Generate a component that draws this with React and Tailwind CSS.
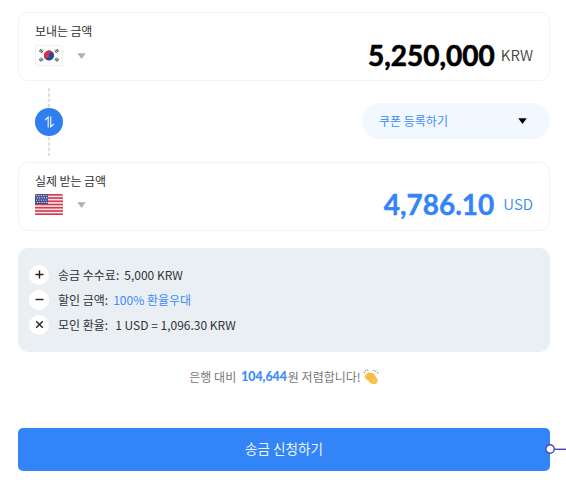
import React from "react";

function Triangle({ className }) {
  return (
    <svg className={className} viewBox="0 0 9 6" aria-hidden="true">
      <path d="M0.3 0.2H8.7L4.5 5.9Z" fill="currentColor" />
    </svg>
  );
}

function KoreaFlag() {
  const trigrams = [
    [6.2, 6, -56],
    [21.8, 6, 56],
    [6.2, 14.7, 56],
    [21.8, 14.7, -56],
  ];
  return (
    <svg className="h-[21px] w-7" viewBox="0 0 28 21" aria-label="KR">
      <rect x="0.5" y="0.5" width="27" height="20" rx="1.8" fill="#fff" stroke="#f0f0f1" />
      <g transform="translate(14 10.5) rotate(-8)">
        <circle r="5.1" fill="#1f4ba0" />
        <path d="M-5.1 0A5.1 5.1 0 0 1 5.1 0A2.55 2.55 0 0 0 0 0A2.55 2.55 0 0 1 -5.1 0Z" fill="#dc3145" />
      </g>
      {trigrams.map(([x, y, r]) => (
        <g key={`${x}-${y}`} transform={`translate(${x} ${y}) rotate(${r})`} stroke="#444" strokeWidth="0.9">
          <path d="M-1.6 -1.3H1.6M-1.6 0H1.6M-1.6 1.3H1.6" />
        </g>
      ))}
    </svg>
  );
}

function UsFlag() {
  return (
    <svg className="h-[21px] w-7" viewBox="0 0 28 21" aria-label="US">
      <clipPath id="us">
        <rect width="28" height="21" rx="1.5" />
      </clipPath>
      <g clipPath="url(#us)">
        <rect width="28" height="21" fill="#f8e4e7" />
        {[0, 1, 2, 3, 4, 5, 6].map((i) => (
          <rect key={i} y={i * 3.23} width="28" height="1.62" fill="#d33a4e" />
        ))}
        <rect width="13" height="10" fill="#434a8c" />
        {[0, 1, 2, 3].map((r) =>
          [0, 1, 2, 3, 4].map((c) => (
            <circle key={`${r}${c}`} cx={1.5 + c * 2.4 + (r % 2) * 0.8} cy={1.5 + r * 2.3} r="0.7" fill="#d6d9ee" />
          ))
        )}
      </g>
    </svg>
  );
}

function AmountCard({ label, flag, flagGap, children }) {
  return (
    <section className="flex h-[69px] justify-between rounded-[10px] border border-[#f0f4f7] bg-white pr-4 pl-4">
      <div className="pt-[9px]">
        <div className="h-[18px] text-[12px] leading-[18px] tracking-[-0.1px] whitespace-nowrap text-[#333]">{label}</div>
        <div className={`${flagGap} flex items-center gap-[14px]`}>
          {flag}
          <Triangle className="h-[6px] w-[9px] text-[#b0b0b0]" />
        </div>
      </div>
      <div className="flex pt-[22px] leading-[40px] whitespace-nowrap">{children}</div>
    </section>
  );
}

function DetailRow({ icon, label, children }) {
  return (
    <div className="flex h-[25px] items-center whitespace-nowrap">
      <span className="flex h-5 w-5 items-center justify-center rounded-full bg-white">
        <svg className="h-[9px] w-[9px]" viewBox="0 0 9 9" fill="none" stroke="#222" strokeWidth="1.4">
          <path d={icon} />
        </svg>
      </span>
      <span className="ml-[9px]">{label}</span>
      {children}
    </div>
  );
}

function ClapIcon() {
  return (
    <svg className="h-4 w-4" viewBox="0 0 16 16" fill="none">
      <path d="M2 6.5L5 3.3Q6.2 2.8 7 4L9.6 3.8Q11.2 4.2 11.7 6L14.2 9.5Q15.7 12.5 13.5 14.5Q10.5 16.2 7.4 14L2.3 9.5Q1.2 7.8 2 6.5Z" fill="#f8c64f" />
      <path d="M4 7.2L8.5 11.2M5.3 5.4L9.8 9.5M7 4.2L11 8" stroke="#d99c32" strokeWidth="0.6" />
      <path d="M0.6 3L1.9 3.6M2.3 0.9L3 2.1M4.7 0.5V1.7M11 0.9L10.6 2.1M13.2 1.5L12.4 2.7M15.2 3.4L13.9 4" stroke="#666" strokeWidth="0.9" />
    </svg>
  );
}

export default function App() {
  return (
    <main className="h-[480px] w-[566px] overflow-hidden bg-white pt-3 pl-[18px] font-['Noto_Sans_CJK_KR',sans-serif]">
      <div className="w-[532px]">
        <AmountCard label="보내는 금액" flag={<KoreaFlag />} flagGap="mt-[5px]">
          <span className="font-['Lato',sans-serif] text-[28px] font-bold text-black [-webkit-text-stroke:0.6px_black]">5,250,000</span>
          <span className="ml-[6px] text-[15px] font-[350] text-[#444]">KRW</span>
        </AmountCard>

        <div className="flex h-[81px] items-center justify-between">
          <div className="ml-[17px] flex w-7 flex-col items-center">
            <svg className="h-5 w-[2px]" viewBox="0 0 2 20">
              <path d="M1 0V20" stroke="#d5d5d5" strokeWidth="1.5" strokeDasharray="3.5 1.8" />
            </svg>
            <span className="flex h-7 w-7 items-center justify-center rounded-full bg-[#2f7ff0]">
              <svg className="h-3 w-[11px]" viewBox="0 0 11 12" fill="none" stroke="#e8f1ff" strokeWidth="1.2">
                <path d="M1.1 4L4.2 1.2V11.4M6.7 0.6V10.8L9.8 8" />
              </svg>
            </span>
            <svg className="h-5 w-[2px]" viewBox="0 0 2 20">
              <path d="M1 1V20" stroke="#d5d5d5" strokeWidth="1.5" strokeDasharray="3.5 1.8" />
            </svg>
          </div>
          <button className="-mt-px flex h-9 w-[188px] items-center justify-between rounded-full bg-[#f2f8ff] pr-[23px] pl-[17px] text-[12px] text-[#3d8bf8]">
            <span className="-mt-px">쿠폰 등록하기</span>
            <Triangle className="h-[6px] w-[9px] text-black" />
          </button>
        </div>

        <AmountCard label="실제 받는 금액" flag={<UsFlag />} flagGap="mt-1">
          <span className="-mt-px font-['Lato',sans-serif] text-[28px] font-bold text-[#3384f6] [-webkit-text-stroke:0.4px_#3384f6]">4,786.10</span>
          <span className="-mt-px ml-[9px] text-[15px] font-[350] text-[#3d8bf8]">USD</span>
        </AmountCard>

        <section className="mt-[17px] flex h-[104px] flex-col rounded-[10px] bg-[#e9eff3] pt-[14px] pl-[11px] text-[12px] text-[#333]">
          <DetailRow icon="M0.5 4.5H8.5M4.5 0.5V8.5" label="송금 수수료:">
            <span className="ml-[5px]">5,000 KRW</span>
          </DetailRow>
          <DetailRow icon="M0.5 4.5H8.5" label="할인 금액:">
            <span className="ml-[5px] text-[#3d8bf8]">100% 환율우대</span>
          </DetailRow>
          <DetailRow icon="M1.2 1.2L7.8 7.8M7.8 1.2L1.2 7.8" label="모인 환율:">
            <span className="ml-[7px]">1 USD = 1,096.30 KRW</span>
          </DetailRow>
        </section>

        <div className="mt-4 flex h-[18px] items-center justify-center whitespace-nowrap text-[12px] text-[#777]">
          <span>은행 대비</span>
          <b className="ml-[5px] font-['Lato',sans-serif] text-[12.3px] font-bold text-[#3d8bf8] [-webkit-text-stroke:0.2px_#3d8bf8]">104,644</b>
          <span className="mr-[2px] ml-px">원 저렴합니다!</span>
          <ClapIcon />
        </div>

        <div className="relative mt-[42px]">
          <button className="flex h-[43px] w-full items-center justify-center rounded-[5px] bg-[#3384f7] pb-[2px] text-[13.6px] text-[#edf4ff]">
            송금 신청하기
          </button>
          <svg className="absolute top-[16px] left-[527px] h-[10px] w-[21px]" viewBox="0 0 21 10">
            <path d="M9 5.3H21" stroke="#4743b5" strokeWidth="1.4" />
            <circle cx="5" cy="5" r="4.2" fill="#fff" stroke="#4743b5" strokeWidth="1.4" />
          </svg>
        </div>
      </div>
    </main>
  );
}
